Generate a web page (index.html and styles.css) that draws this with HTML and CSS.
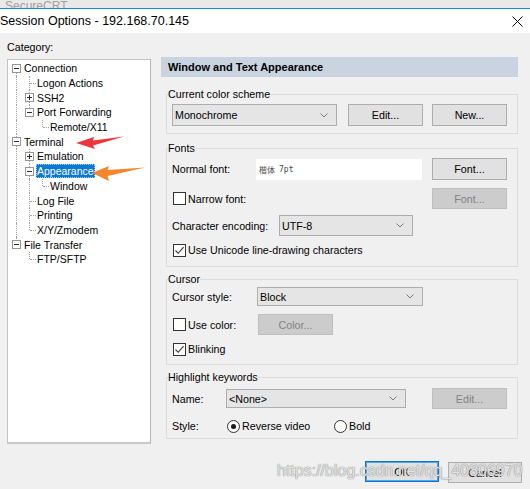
FILE: index.html
```html
<!DOCTYPE html>
<html>
<head>
<meta charset="utf-8">
<link rel="stylesheet" href="styles.css">
</head>
<body>
<div class="screen">
  <div class="behind"><span>SecureCRT</span></div>
  <div class="titlebar">
    <span class="title">Session Options - 192.168.70.145</span>
    <svg class="close" width="11" height="11" viewBox="0 0 11 11"><path d="M0.5 0.5 L10.5 10.5 M10.5 0.5 L0.5 10.5" stroke="#000" stroke-width="1" fill="none"/></svg>
  </div>
  <div class="body">
    <div class="main">
      <div class="left">
        <div class="cat-label">Category:</div>
        <div class="tree">
          <div class="node"><span class="c start boxed"><i class="box"></i></span><span class="lbl">Connection</span></div>
          <div class="node"><span class="c pipe"></span><span class="c tee"></span><span class="lbl">Logon Actions</span></div>
          <div class="node"><span class="c pipe"></span><span class="c tee boxed"><i class="box plus"></i></span><span class="lbl">SSH2</span></div>
          <div class="node"><span class="c pipe"></span><span class="c end boxed"><i class="box"></i></span><span class="lbl">Port Forwarding</span></div>
          <div class="node"><span class="c pipe"></span><span class="c blank"></span><span class="c end"></span><span class="lbl">Remote/X11</span></div>
          <div class="node"><span class="c tee boxed"><i class="box"></i></span><span class="lbl">Terminal</span></div>
          <div class="node"><span class="c pipe"></span><span class="c tee boxed"><i class="box plus"></i></span><span class="lbl">Emulation</span></div>
          <div class="node"><span class="c pipe"></span><span class="c tee boxed"><i class="box"></i></span><span class="lbl sel">Appearance</span></div>
          <div class="node"><span class="c pipe"></span><span class="c pipe"></span><span class="c end"></span><span class="lbl">Window</span></div>
          <div class="node"><span class="c pipe"></span><span class="c tee"></span><span class="lbl">Log File</span></div>
          <div class="node"><span class="c pipe"></span><span class="c tee"></span><span class="lbl">Printing</span></div>
          <div class="node"><span class="c pipe"></span><span class="c end"></span><span class="lbl">X/Y/Zmodem</span></div>
          <div class="node"><span class="c end boxed"><i class="box"></i></span><span class="lbl">File Transfer</span></div>
          <div class="node"><span class="c blank"></span><span class="c end"></span><span class="lbl">FTP/SFTP</span></div>
        </div>
      </div>
      <div class="right">
        <div class="header">Window and Text Appearance</div>

        <fieldset class="group g-scheme">
          <legend>Current color scheme</legend>
          <div class="gbody">
            <div class="row r-scheme">
              <div class="select w-scheme"><span>Monochrome</span><svg class="chev" width="8" height="5" viewBox="0 0 8 5"><path d="M0.5 0.5 L4 4 L7.5 0.5" stroke="#7a7a7a" fill="none"/></svg></div>
              <div class="btn b-edit">Edit...</div>
              <div class="btn b-new">New...</div>
            </div>
          </div>
        </fieldset>

        <fieldset class="group g-fonts">
          <legend>Fonts</legend>
          <div class="gbody">
            <div class="row r-normal">
              <span class="lab w-normal">Normal font:</span>
              <div class="field"><span class="cjk">楷体</span><span class="mono">7pt</span></div>
              <div class="btn push">Font...</div>
            </div>
            <div class="row r-narrow">
              <span class="chk"></span><span class="chk-text">Narrow font:</span>
              <div class="btn disabled push">Font...</div>
            </div>
            <div class="row r-enc">
              <span class="lab w-enc">Character encoding:</span>
              <div class="select w-enc-sel"><span>UTF-8</span><svg class="chev" width="8" height="5" viewBox="0 0 8 5"><path d="M0.5 0.5 L4 4 L7.5 0.5" stroke="#7a7a7a" fill="none"/></svg></div>
            </div>
            <div class="row r-uni">
              <span class="chk on"><svg width="11" height="11" viewBox="0 0 11 11"><path d="M1.5 5.5 L4.2 8.3 L9.6 2.2" stroke="#333" stroke-width="1.1" fill="none"/></svg></span><span class="chk-text">Use Unicode line-drawing characters</span>
            </div>
          </div>
        </fieldset>

        <fieldset class="group g-cursor">
          <legend>Cursor</legend>
          <div class="gbody">
            <div class="row r-cstyle">
              <span class="lab w-cstyle">Cursor style:</span>
              <div class="select w-cstyle-sel"><span>Block</span><svg class="chev" width="8" height="5" viewBox="0 0 8 5"><path d="M0.5 0.5 L4 4 L7.5 0.5" stroke="#7a7a7a" fill="none"/></svg></div>
            </div>
            <div class="row r-ucolor">
              <span class="chkwrap w-ucolor"><span class="chk"></span><span class="chk-text">Use color:</span></span>
              <div class="btn disabled">Color...</div>
            </div>
            <div class="row r-blink">
              <span class="chk on"><svg width="11" height="11" viewBox="0 0 11 11"><path d="M1.5 5.5 L4.2 8.3 L9.6 2.2" stroke="#333" stroke-width="1.1" fill="none"/></svg></span><span class="chk-text">Blinking</span>
            </div>
          </div>
        </fieldset>

        <fieldset class="group g-high">
          <legend>Highlight keywords</legend>
          <div class="gbody">
            <div class="row r-name">
              <span class="lab w-name">Name:</span>
              <div class="select w-name-sel"><span>&lt;None&gt;</span><svg class="chev" width="8" height="5" viewBox="0 0 8 5"><path d="M0.5 0.5 L4 4 L7.5 0.5" stroke="#7a7a7a" fill="none"/></svg></div>
              <div class="btn disabled push">Edit...</div>
            </div>
            <div class="row r-style">
              <span class="lab w-style">Style:</span>
              <span class="radio-item w-rev"><span class="radio on"></span><span class="chk-text">Reverse video</span></span>
              <span class="radio-item"><span class="radio"></span><span class="chk-text">Bold</span></span>
            </div>
          </div>
        </fieldset>
      </div>
    </div>
    <div class="footer">
      <div class="btn ok">OK</div>
      <div class="btn cancel">Cancel</div>
    </div>
  </div>

  <svg class="arrows" width="530" height="489" viewBox="0 0 530 489">
    <polygon points="76,143 94,137 93,140.5 124,136.5 93,145.5 95,149" fill="#f0353a"/>
    <polygon points="92,173 109,166 107.5,170 145,167.5 107.5,176 109,181" fill="#f5862e"/>
  </svg>
  <div class="watermark">https://blog.csdn.net/qq_40806970</div>
</div>
</body>
</html>
```

FILE: styles.css
```css
* { box-sizing: border-box; margin: 0; padding: 0; }
html, body { width: 530px; height: 489px; overflow: hidden; }
body {
  font-family: "Liberation Sans", Arial, sans-serif;
  font-size: 10.7px;
  color: #000;
  background: #f0f0f0;
}
.screen {
  position: relative;
  width: 530px;
  height: 489px;
  display: flex;
  flex-direction: column;
}
.behind {
  height: 8px;
  background: #e9e9e9;
  overflow: hidden;
  color: #a0a0a0;
  font-size: 12px;
  line-height: 14px;
  padding-left: 5px;
}
.behind span { display: block; margin-top: -1px; }
.titlebar {
  height: 25px;
  border-top: 1px solid #1a86d9;
  background: #fff;
  display: flex;
  align-items: center;
  justify-content: space-between;
  padding-right: 7px;
  flex: none;
}
.title { font-size: 12.5px; color: #000; }
.close { display: block; }

.body { flex: 1; display: flex; flex-direction: column; background: #f0f0f0; }
.main { display: flex; flex: none; }
.left { width: 161px; flex: none; padding: 7px 0 0 7px; }
.cat-label { height: 14px; line-height: 14px; margin-bottom: 5px; }
.tree {
  width: 144px;
  height: 385px;
  background: #fff;
  border: 1px solid #c3c3c3;
  border-right-color: #b4b4b4;
  border-bottom: 2px solid #c8c8c8;
  padding: 1px 0 0 2px;
  font-size: 10.5px;
}
.node { display: flex; align-items: center; height: 14.7px; white-space: nowrap; }
.c {
  position: relative;
  width: 13px;
  height: 100%;
  flex: none;
  display: flex;
  align-items: center;
  justify-content: flex-start;
  padding-left: 2px;
}
.c::before {
  content: "";
  position: absolute;
  left: 6px;
  top: 0;
  bottom: 0;
  border-left: 1px dotted #a0a0a0;
}
.c.blank::before { display: none; }
.c.start::before { top: 50%; }
.c.end::before { bottom: 50%; }
.c.tee::after, .c.end::after, .c.start::after {
  content: "";
  position: absolute;
  left: 7px;
  width: 6px;
  top: 50%;
  border-top: 1px dotted #a0a0a0;
}
.c.boxed::after { display: none; }
.box {
  position: relative;
  z-index: 1;
  width: 9px;
  height: 9px;
  border: 1px solid #969696;
  background: #fff;
  display: flex;
  align-items: center;
  justify-content: center;
}
.box::before { content: ""; width: 5px; height: 1px; background: #2a2a2a; }
.box.plus::after {
  content: "";
  position: absolute;
  left: 3px;
  top: 1px;
  width: 1px;
  height: 5px;
  background: #2a2a2a;
}
.lbl { padding: 0 1px; line-height: 14px; }
.lbl.sel {
  background: #0a78d7;
  color: #fff;
  outline: 1px dotted #9fd0f5;
  outline-offset: -1px;
}

.right { width: 357px; flex: none; padding-top: 24px; }
.header {
  height: 20px;
  line-height: 20px;
  background: #c9d4e0;
  font-weight: bold;
  font-size: 11px;
  padding-left: 7px;
}
fieldset.group {
  width: 352px;
  margin-left: 5px;
  border: 1px solid #dcdcdc;
  padding: 0 0 7px 1px;
  min-width: 0;
}
fieldset.group legend { line-height: 14px; padding: 0; }
.g-scheme { margin-top: 10px; }
.g-fonts { margin-top: 7px; }
.g-fonts { padding-bottom: 8px !important; }
.g-cursor { margin-top: 5px; }
.g-high { margin-top: 5px; padding-bottom: 2px !important; }
.gbody { padding: 3px 10px 0 4px; }
.g-cursor .gbody { padding-top: 1px; }
.g-high .gbody { padding-top: 4px; }

.row { display: flex; align-items: center; }
.r-scheme { height: 22px; }
.r-normal { height: 22px; }
.r-narrow { height: 21px; margin-top: 8px; }
.r-enc { height: 21px; margin-top: 6px; }
.r-uni { height: 16px; margin-top: 6px; }
.r-cstyle { height: 19px; }
.r-ucolor { height: 21px; margin-top: 8px; }
.r-blink { height: 16px; margin-top: 6px; }
.r-name { height: 21px; }
.r-style { height: 20px; margin-top: 7px; }

.lab { flex: none; }
.w-normal { width: 84px; }
.w-enc { width: 107px; }
.w-cstyle { width: 85px; }
.w-name { width: 54px; }
.w-style { width: 55px; }
.w-ucolor { width: 86px; }
.w-rev { width: 107px; }

.select {
  flex: none;
  height: 21px;
  background: #e5e5e5;
  border: 1px solid #adadad;
  display: flex;
  align-items: center;
  justify-content: space-between;
  padding: 0 8px 0 2px;
}
.select .chev { display: block; }
.w-scheme { width: 165px; height: 22px; }
.w-enc-sel { width: 134px; }
.w-cstyle-sel { width: 166px; height: 19px; }
.w-name-sel { width: 180px; height: 19px; }

.btn {
  flex: none;
  width: 75px;
  height: 22px;
  background: #e1e1e1;
  border: 1px solid #adadad;
  display: flex;
  align-items: center;
  justify-content: center;
}
.btn.disabled { background: #cccccc; border-color: #bfbfbf; color: #838383; height: 21px; }
.b-edit { margin-left: 11px; }
.b-new { margin-left: 9px; }
.push { margin-left: auto; }

.field {
  flex: none;
  width: 166px;
  height: 21px;
  background: #fff;
  display: flex;
  align-items: center;
  padding-left: 3px;
  gap: 4px;
  color: #4a4a4a;
  font-size: 8px;
}
.cjk { font-family: "Noto Sans CJK SC", sans-serif; }
.mono { font-family: "DejaVu Sans Mono", "Liberation Mono", monospace; }

.chkwrap, .radio-item { display: flex; align-items: center; flex: none; }
.chk {
  flex: none;
  width: 13px;
  height: 13px;
  margin-left: 1px;
  background: #fff;
  border: 1px solid #333;
  display: flex;
  align-items: center;
  justify-content: center;
}
.chk svg { display: block; }
.chk-text { margin-left: 2px; }
.radio {
  flex: none;
  width: 13px;
  height: 13px;
  border: 1px solid #333;
  border-radius: 50%;
  background: #fff;
  display: flex;
  align-items: center;
  justify-content: center;
}
.radio.on::before {
  content: "";
  width: 5px;
  height: 5px;
  border-radius: 50%;
  background: #1a1a1a;
}

.footer {
  display: flex;
  justify-content: flex-end;
  gap: 9px;
  padding-right: 8px;
  margin-top: 17px;
}
.footer .btn { width: 74px; height: 21px; }
.btn.ok { border: 1px solid #0078d7; box-shadow: inset 0 0 0 1px #5aa4e4; }
.btn.cancel { margin-top: 1px; }

.arrows { position: absolute; left: 0; top: 0; pointer-events: none; }
.watermark {
  position: absolute;
  left: 277px;
  top: 461px;
  font-size: 16px;
  line-height: 20px;
  color: rgba(255, 255, 255, 0.75);
  text-shadow: 0 0 1px #8a8a8a, 0 0 1px #8a8a8a;
  pointer-events: none;
}
```
